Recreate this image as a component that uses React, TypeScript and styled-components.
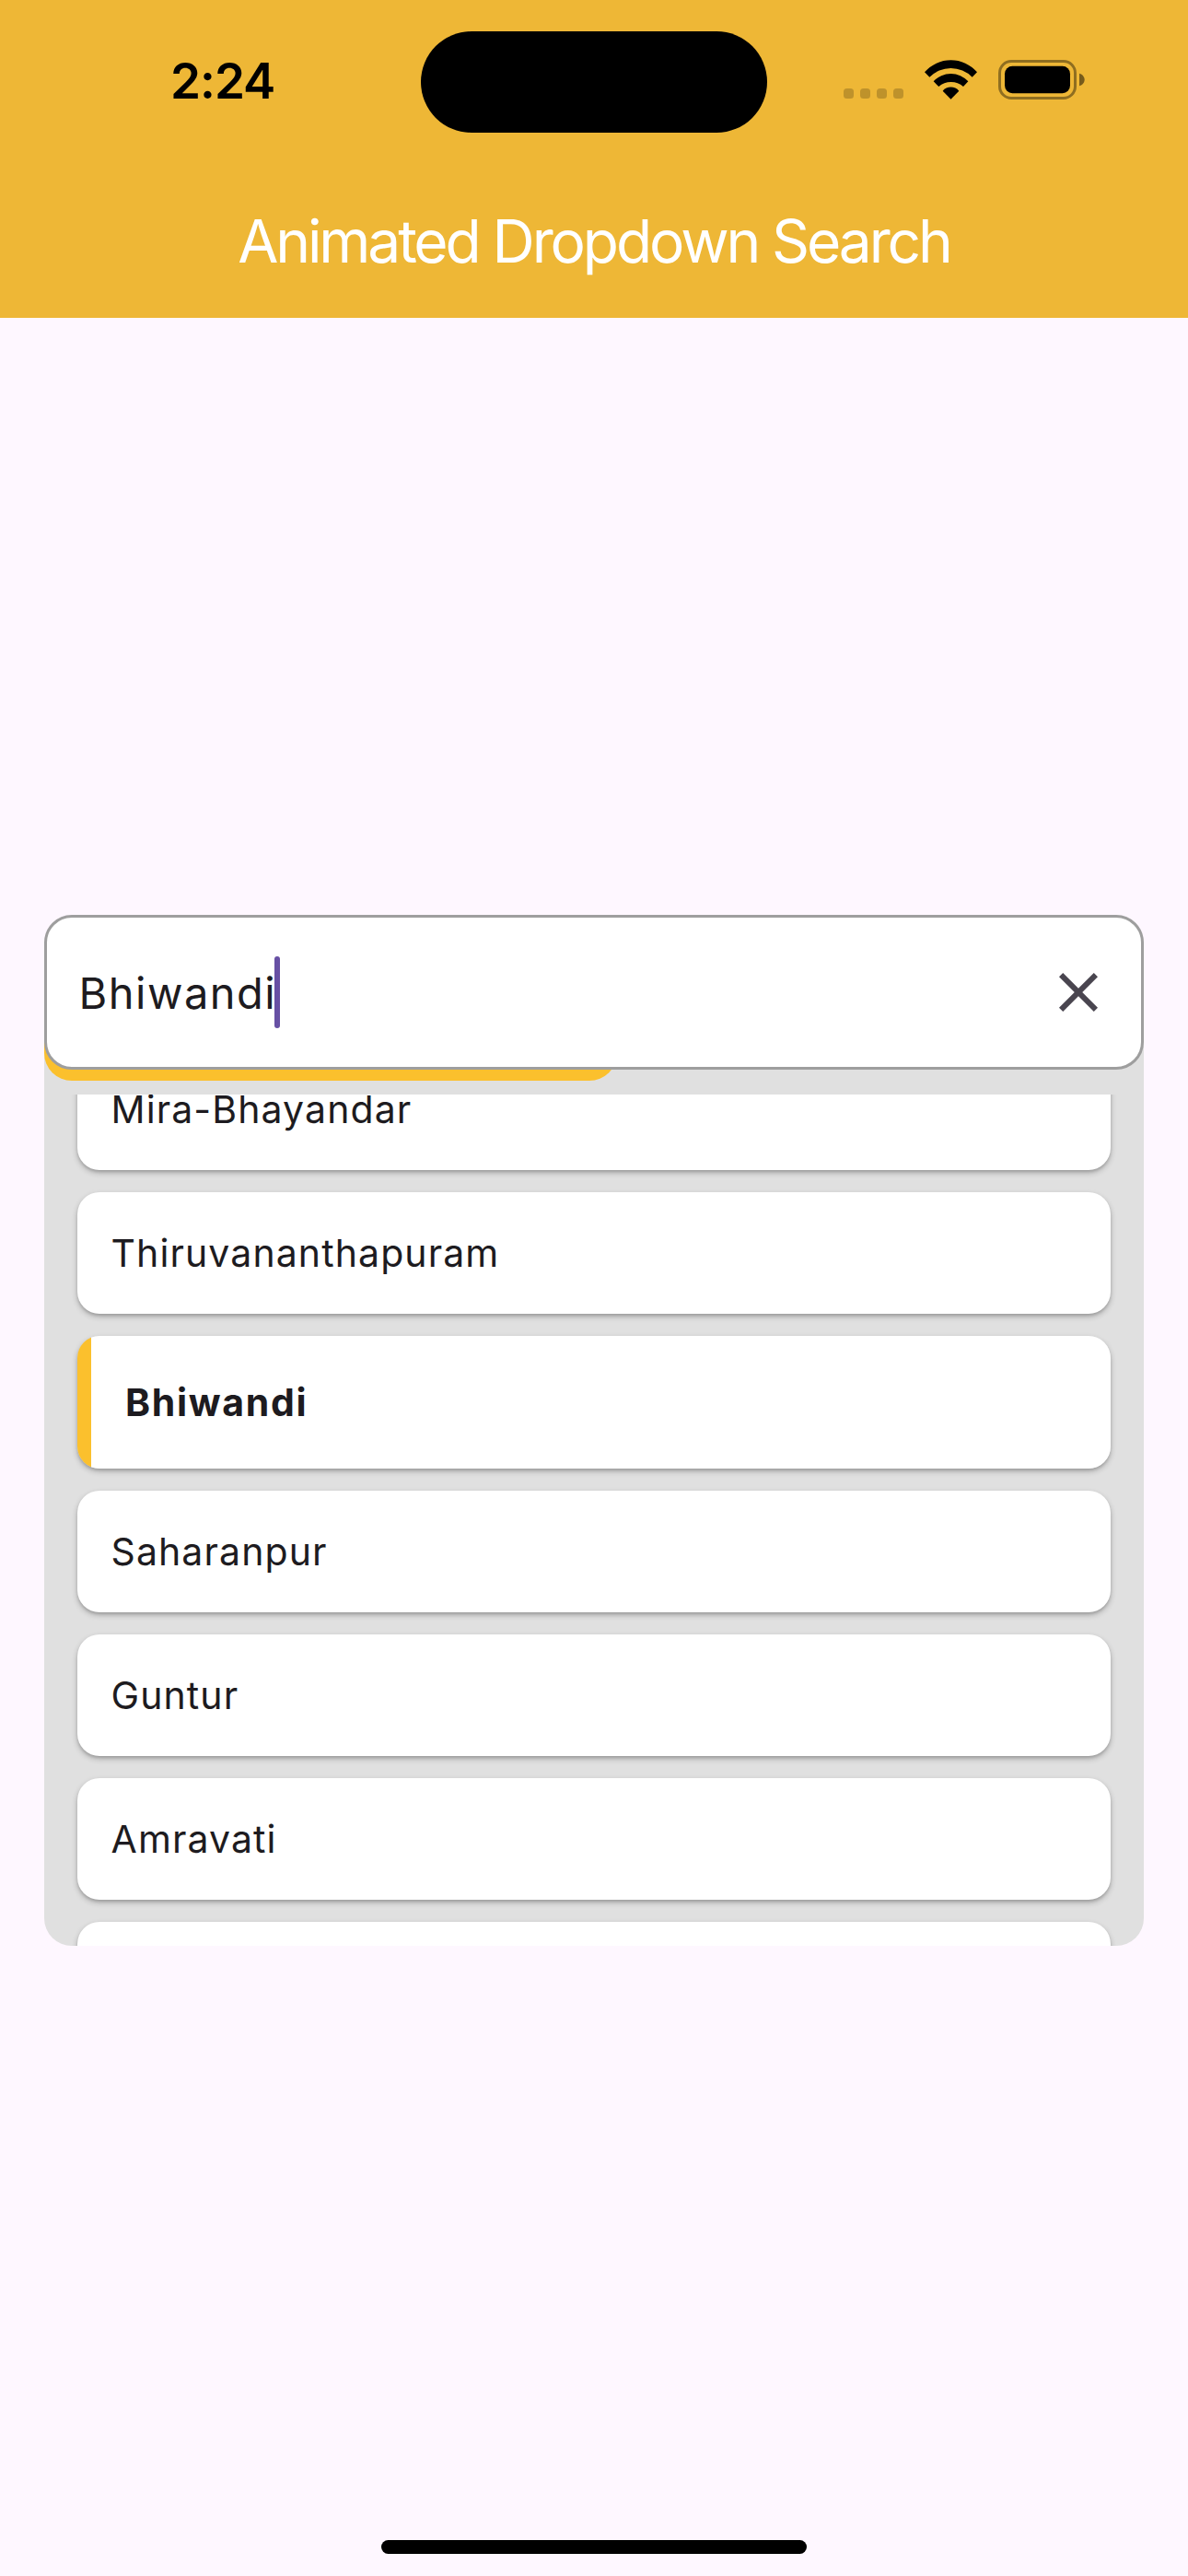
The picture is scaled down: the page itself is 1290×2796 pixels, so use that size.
import React from "react";
import styled, { createGlobalStyle, css } from "styled-components";

const GlobalStyle = createGlobalStyle`
  * { box-sizing: border-box; }
  body { margin: 0; background: #fef7ff; }
`;

const Screen = styled.div`
  display: flex;
  flex-direction: column;
  width: 1290px;
  height: 2796px;
  overflow: hidden;
  background: #fef7ff;
  color: #1d1b20;
  font-family: Inter, "Liberation Sans", sans-serif;
`;

const Header = styled.header`
  flex: none;
  display: flex;
  flex-direction: column;
  height: 345px;
  background: #eeb736;
`;

const StatusBar = styled.div`
  display: grid;
  grid-template-columns: 457px 376px 1fr;
  height: 177px;
  padding-top: 33.5px;
`;

const Time = styled.div`
  padding: 22px 0 0 185px;
  color: #000;
  font-size: 53px;
  font-weight: 600;
  line-height: 64px;
  letter-spacing: -1px;
`;

const Island = styled.div`
  height: 110.5px;
  border-radius: 56px;
  background: #000;
`;

const StatusIcons = styled.div`
  display: flex;
  align-items: flex-start;
  padding: 31.5px 0 0 83px;
`;

const SignalDots = styled.div`
  display: flex;
  gap: 7px;
  margin: 31px 23px 0 0;
`;

const Dot = styled.i`
  width: 11px;
  height: 11px;
  border-radius: 3.5px;
  background: rgba(0, 0, 0, 0.2);
`;

const WifiGlyph = styled.svg`
  display: block;
  width: 57px;
  height: 43px;
  margin-right: 23px;
`;

const BatteryGlyph = styled.svg`
  display: block;
  width: 94px;
  height: 43px;
`;

const Title = styled.h1`
  margin: 0;
  padding-top: 45px;
  text-align: center;
  color: #fff;
  font-size: 64px;
  font-weight: 400;
  line-height: 80px;
  letter-spacing: -3.1px;
`;

const Body = styled.main`
  flex: 1;
  display: flex;
  flex-direction: column;
  padding: 648px 48px 0;
`;

const SearchField = styled.div`
  position: relative;
  z-index: 1;
  flex: none;
  display: flex;
  align-items: center;
  height: 168px;
  padding: 0 32px 0 34.5px;
  border: 3px solid #9e9e9e;
  border-radius: 30px;
  background: #fff;
`;

const Query = styled.span`
  padding-top: 2px;
  font-size: 47px;
  line-height: 72px;
  letter-spacing: 1.5px;
`;

const Caret = styled.i`
  width: 6px;
  height: 78px;
  margin-left: -2px;
  border-radius: 3px;
  background: #6750a4;
`;

const ClearButton = styled.button`
  display: flex;
  margin: 0 0 0 auto;
  padding: 0;
  border: 0;
  background: none;
`;

const Panel = styled.section`
  position: relative;
  flex: none;
  height: 980.5px;
  margin-top: -30px;
  padding-top: 57px;
  overflow: hidden;
  border-radius: 0 0 30px 30px;
  background: #e0e0e0;
`;

const Progress = styled.div`
  position: absolute;
  top: 0;
  left: 0;
  width: 622px;
  height: 42px;
  border-radius: 0 0 30px 30px;
  background: #fbc02d;
`;

const Viewport = styled.div`
  height: 924px;
  padding: 0 36px;
  overflow: hidden;
`;

const List = styled.ul`
  display: flex;
  flex-direction: column;
  gap: 24px;
  margin: -50px 0 0;
  padding: 0;
  list-style: none;
`;

const City = styled.li<{ $selected?: boolean }>`
  flex: none;
  display: flex;
  align-items: center;
  height: 132px;
  padding-left: 36.5px;
  border-radius: 24px;
  background: #fff;
  box-shadow: 0 3px 6px rgba(0, 0, 0, 0.24), 0 2px 3px rgba(0, 0, 0, 0.12);
  font-size: 41px;
  line-height: 60px;
  letter-spacing: 1.1px;
  ${(p) =>
    p.$selected &&
    css`
      height: 144px;
      padding-left: 52px;
      background: linear-gradient(to right, #fbc02d 15px, #fff 15px);
      font-weight: 700;
      letter-spacing: 1.7px;
    `}
`;

const HomeIndicator = styled.div`
  flex: none;
  align-self: center;
  width: 462px;
  height: 15px;
  margin-bottom: 24px;
  border-radius: 8px;
  background: #000;
`;

const cities = [
  "Mira-Bhayandar",
  "Thiruvananthapuram",
  "Bhiwandi",
  "Saharanpur",
  "Guntur",
  "Amravati",
  "",
];

const Wifi = () => (
  <WifiGlyph viewBox="0 0 171 129" fill="#000">
    <path d="M0 40A113 113 0 0 1 171 40L155 56A98 98 0 0 0 16 56Z" />
    <path d="M29 70A76 76 0 0 1 142 70L126 87A60 60 0 0 0 46 87Z" />
    <path d="M59 101A34 34 0 0 1 112 101L85.5 128Z" />
  </WifiGlyph>
);

const Battery = () => (
  <BatteryGlyph viewBox="0 0 282 129">
    <rect x="4.5" y="4.5" width="246" height="120" rx="38" fill="none" stroke="#000" strokeOpacity="0.4" strokeWidth="9" />
    <rect x="21" y="20.5" width="213" height="88" rx="25" />
    <path d="M264 44C275 47 281 56 281 64.500C281 73 275 82 264 85Z" fillOpacity="0.5" />
  </BatteryGlyph>
);

export default function App() {
  const selected = "Bhiwandi";
  return (
    <Screen>
      <GlobalStyle />
      <Header>
        <StatusBar>
          <Time>2:24</Time>
          <Island />
          <StatusIcons>
            <SignalDots>
              <Dot />
              <Dot />
              <Dot />
              <Dot />
            </SignalDots>
            <Wifi />
            <Battery />
          </StatusIcons>
        </StatusBar>
        <Title>Animated Dropdown Search</Title>
      </Header>
      <Body>
        <SearchField>
          <Query>{selected}</Query>
          <Caret />
          <ClearButton aria-label="Clear">
            <svg width="72" height="72" viewBox="0 0 24 24" fill="#49454f">
              <path d="M19 6.410 17.590 5 12 10.590 6.410 5 5 6.410 10.590 12 5 17.590 6.410 19 12 13.410 17.590 19 19 17.590 13.410 12z" />
            </svg>
          </ClearButton>
        </SearchField>
        <Panel>
          <Progress />
          <Viewport>
            <List>
              {cities.map((city, i) => (
                <City key={i} $selected={city === selected}>
                  {city}
                </City>
              ))}
            </List>
          </Viewport>
        </Panel>
      </Body>
      <HomeIndicator />
    </Screen>
  );
}
